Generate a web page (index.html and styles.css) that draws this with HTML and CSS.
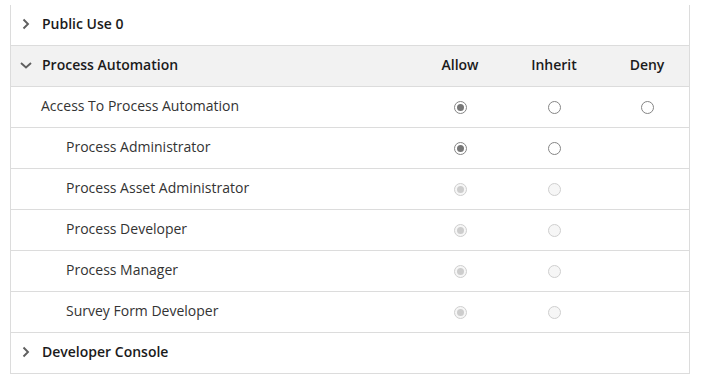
FILE: index.html
```html
<!DOCTYPE html>
<html>
<head>
<meta charset="utf-8">
<link rel="stylesheet" href="styles.css">
</head>
<body>
<div class="perm">
  <div class="row group">
    <div class="name"><svg class="chev" viewBox="0 0 14 14"><path d="M4.5 2.5 L9 7 L4.5 11.5"/></svg>Public Use 0</div>
  </div>
  <div class="row group open">
    <div class="name"><svg class="chev" viewBox="0 0 14 14"><path d="M2 5 L7 9.5 L12 5"/></svg>Process Automation</div>
    <div class="col">Allow</div>
    <div class="col">Inherit</div>
    <div class="col last">Deny</div>
  </div>
  <div class="row item">
    <div class="name lvl1">Access To Process Automation</div>
    <div class="col"><span class="radio on"></span></div>
    <div class="col"><span class="radio"></span></div>
    <div class="col last"><span class="radio"></span></div>
  </div>
  <div class="row item">
    <div class="name lvl2">Process Administrator</div>
    <div class="col"><span class="radio on"></span></div>
    <div class="col"><span class="radio"></span></div>
    <div class="col last"></div>
  </div>
  <div class="row item">
    <div class="name lvl2">Process Asset Administrator</div>
    <div class="col"><span class="radio on dis"></span></div>
    <div class="col"><span class="radio dis"></span></div>
    <div class="col last"></div>
  </div>
  <div class="row item">
    <div class="name lvl2">Process Developer</div>
    <div class="col"><span class="radio on dis"></span></div>
    <div class="col"><span class="radio dis"></span></div>
    <div class="col last"></div>
  </div>
  <div class="row item">
    <div class="name lvl2">Process Manager</div>
    <div class="col"><span class="radio on dis"></span></div>
    <div class="col"><span class="radio dis"></span></div>
    <div class="col last"></div>
  </div>
  <div class="row item">
    <div class="name lvl2">Survey Form Developer</div>
    <div class="col"><span class="radio on dis"></span></div>
    <div class="col"><span class="radio dis"></span></div>
    <div class="col last"></div>
  </div>
  <div class="row group">
    <div class="name"><svg class="chev" viewBox="0 0 14 14"><path d="M4.5 2.5 L9 7 L4.5 11.5"/></svg>Developer Console</div>
  </div>
</div>
</body>
</html>
```
FILE: styles.css
```css
html, body {
  margin: 0;
  padding: 0;
  background: #fff;
}
body {
  font-family: "Open Sans", "Noto Sans", sans-serif;
  font-size: 14px;
  color: #333;
  padding: 5px 0 0 10px;
}
.perm {
  width: 678px;
  border-left: 1px solid #dcdcdc;
  border-right: 1px solid #dcdcdc;
}
.row {
  display: grid;
  grid-template-columns: 1fr 94px 94px 88px;
  height: 36px;
  padding-bottom: 4px;
  align-items: center;
  border-bottom: 1px solid #dcdcdc;
}
.name {
  display: flex;
  align-items: center;
  grid-column: 1;
}
.group .name {
  font-weight: 600;
  color: #1b1b1b;
  padding-left: 8px;
  grid-column: 1 / -1;
}
.group.open .name {
  grid-column: 1;
}
.group.open {
  background: #f2f2f2;
}
.chev {
  width: 14px;
  height: 14px;
  margin-right: 9px;
  margin-top: 2px;
  fill: none;
  stroke: #5f5f5f;
  stroke-width: 1.9;
}
.group .col {
  font-weight: 600;
  color: #1b1b1b;
}
.col {
  display: flex;
  justify-content: center;
  align-items: center;
}
.col.last {
  padding-left: 4px;
}
.lvl1 { padding-left: 30px; }
.lvl2 { padding-left: 55px; }
.radio {
  box-sizing: border-box;
  width: 13px;
  height: 13px;
  border: 1px solid #858585;
  border-radius: 50%;
  background: #fff;
  display: flex;
  align-items: center;
  justify-content: center;
  margin-top: 5px;
}
.radio.on::after {
  content: "";
  width: 7px;
  height: 7px;
  border-radius: 50%;
  background: #777;
}
.radio.dis {
  border-color: #cfcfcf;
  background: #f6f6f6;
}
.radio.on.dis::after {
  background: #cdcdcd;
}
```
